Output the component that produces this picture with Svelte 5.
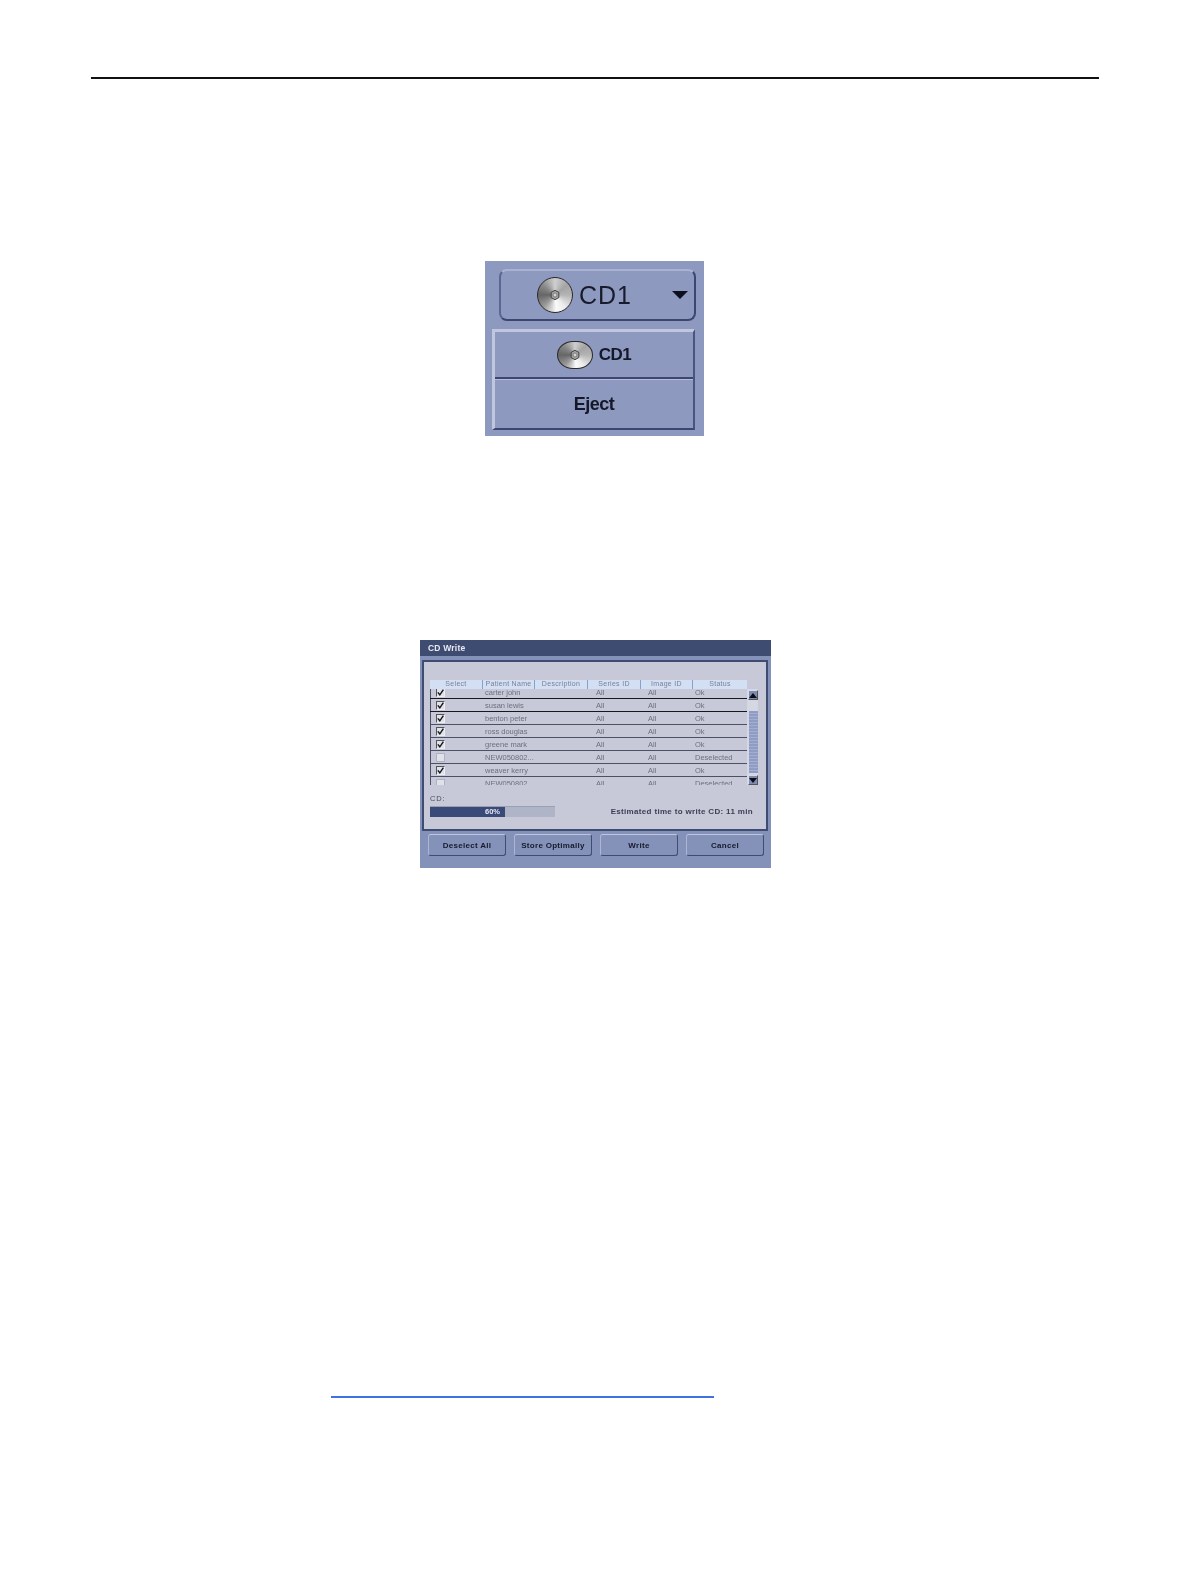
<div class="page">
    <div class="rule"></div>

    <section class="cd-menu">
        <div class="combo">
            {@render disc(false)}
            <span class="combo-label">CD1</span>
            <span class="arrow"></span>
        </div>
        <div class="menu">
            <div class="item first">
                {@render disc(true)}
                <span class="item-label">CD1</span>
            </div>
            <div class="item"><span class="item-label eject">Eject</span></div>
        </div>
    </section>

    <section class="dialog">
        <div class="titlebar">CD Write</div>
        <div class="panel">
            <div class="head">
                {#each columns as col}
                    <span style="width: {col.w}px">{col.label}</span>
                {/each}
            </div>
            <div class="body">
                <div class="rows">
                    {#each rows as row, i}
                        <div class="row" class:dark={i < 2}>
                            <span class="cell-check">
                                <span class="check" class:off={!row.on}>
                                    {#if row.on}
                                        <svg width="7" height="7" viewBox="0 0 7 7" aria-hidden="true">
                                            <path d="M0.8 3.4 L2.8 5.8 L6.4 0.6" fill="none" stroke="#14161e" stroke-width="1.4"/>
                                        </svg>
                                    {/if}
                                </span>
                            </span>
                            <span class="cell-name">{row.name}</span>
                            <span>All</span>
                            <span>All</span>
                            <span>{row.on ? 'Ok' : 'Deselected'}</span>
                        </div>
                    {/each}
                </div>
                <div class="scroll">
                    <span class="sbtn"><i class="up"></i></span>
                    <span class="track"><span class="thumb"></span></span>
                    <span class="sbtn"><i class="down"></i></span>
                </div>
            </div>
            <div class="cd-label">CD:</div>
            <div class="progress-row">
                <div class="progress"><div class="fill" style="width: 60%">60%</div></div>
                <div class="estimate">Estimated time to write CD: 11 min</div>
            </div>
        </div>
        <div class="buttons">
            {#each buttons as b}
                <div class="btn">{b}</div>
            {/each}
        </div>
    </section>

    <div class="link-line"></div>
</div>

{#snippet disc(flat)}
    <span class="disc" class:flat>
        <svg width="12" height="12" viewBox="0 0 14 14" aria-hidden="true">
            <path d="M7 1.5 L11.5 4 L11.5 10 L7 12.5 L2.5 10 L2.5 4 Z" fill="#a2a2a2" stroke="#3c3c3c" stroke-width="1.1" stroke-linejoin="round"/>
            <circle cx="7" cy="7" r="2.3" fill="#d4d4d4" stroke="#666" stroke-width="0.8"/>
        </svg>
    </span>
{/snippet}

<script>
    const columns = [
        { label: 'Select', w: 53 },
        { label: 'Patient Name', w: 52 },
        { label: 'Description', w: 53 },
        { label: 'Series ID', w: 53 },
        { label: 'Image ID', w: 52 },
        { label: 'Status', w: 54 }
    ];

    const rows = [
        { name: 'carter john', on: true },
        { name: 'susan lewis', on: true },
        { name: 'benton peter', on: true },
        { name: 'ross douglas', on: true },
        { name: 'greene mark', on: true },
        { name: 'NEW050802...', on: false },
        { name: 'weaver kerry', on: true },
        { name: 'NEW050802', on: false }
    ];

    const buttons = ['Deselect All', 'Store Optimally', 'Write', 'Cancel'];
</script>

<style>
    :global(body) {
        margin: 0;
        background: #fff;
    }

    .page {
        width: 1190px;
        height: 1584px;
        padding-top: 77px;
        box-sizing: border-box;
        font-family: "Liberation Sans", Arial, sans-serif;
    }

    .rule {
        width: 1008px;
        height: 2px;
        margin-left: 91px;
        background: #111;
    }

    /* device menu */
    .cd-menu {
        margin: 182px 0 0 485px;
        width: 219px;
        height: 175px;
        box-sizing: border-box;
        background: #8e99c0;
        padding: 8px 9px 0 7px;
        filter: blur(0.4px);
    }

    .combo {
        width: 197px;
        height: 52px;
        margin-left: 7px;
        box-sizing: border-box;
        border: 2px solid #3c4670;
        border-top-color: #aab2d2;
        border-left-color: #5c6690;
        border-radius: 8px;
        display: flex;
        align-items: center;
        padding-left: 36px;
        gap: 6px;
        position: relative;
    }

    .combo-label {
        font-size: 25px;
        letter-spacing: 1px;
        color: #171b2b;
    }

    .arrow {
        position: absolute;
        right: 6px;
        top: 20px;
        border-left: 8px solid transparent;
        border-right: 8px solid transparent;
        border-top: 8px solid #0c0f1e;
    }

    .disc {
        width: 36px;
        height: 36px;
        flex: none;
        box-sizing: border-box;
        border: 1px solid #2a2a2a;
        border-radius: 50%;
        display: flex;
        align-items: center;
        justify-content: center;
        background: conic-gradient(#cfcfcf, #a4a4a4 50deg, #b4b4b4 90deg, #ececec 140deg, #fafafa 175deg, #999 225deg, #666 270deg, #8a8a8a 310deg, #cfcfcf);
    }

    .disc.flat {
        height: 28px;
        border-radius: 16px / 14px;
    }

    .menu {
        margin-top: 8px;
        width: 203px;
        height: 101px;
        border: 2px solid #3c4670;
        border-top: 3px solid #c0c6de;
        border-left: 3px solid #c0c6de;
        border-right-color: #4a5480;
        box-sizing: border-box;
    }

    .item {
        height: 50px;
        display: flex;
        align-items: center;
        justify-content: center;
        gap: 6px;
        box-sizing: border-box;
        color: #141828;
    }

    .item.first {
        height: 47px;
        border-bottom: 2px solid #3c4670;
        box-shadow: 0 1px 0 #b4bbd8;
    }

    .item-label {
        font-weight: bold;
        font-size: 17px;
        letter-spacing: -0.5px;
    }

    .eject {
        font-size: 18px;
    }

    /* CD write dialog */
    .dialog {
        margin: 204px 0 0 420px;
        width: 351px;
        height: 228px;
        background: #8492ba;
        filter: blur(0.4px);
    }

    .titlebar {
        height: 16px;
        background: #3e4c72;
        color: #e8ebf4;
        font-size: 8.5px;
        font-weight: bold;
        letter-spacing: 0.2px;
        line-height: 16px;
        padding-left: 8px;
    }

    .panel {
        margin: 4px 3px 0 2px;
        height: 171px;
        box-sizing: border-box;
        background: #c8c9d8;
        border: 2px solid #3e4c72;
        padding: 18px 0 0 6px;
    }

    .head {
        height: 9px;
        width: 317px;
        background: #d3dff2;
        display: flex;
        font-size: 7px;
        letter-spacing: 0.3px;
        line-height: 8px;
        color: #7a8098;
        text-align: center;
    }

    .head span {
        border-right: 1px solid #8aa0c8;
        box-sizing: border-box;
        white-space: nowrap;
    }

    .head span:last-child {
        border-right: 0;
    }

    .body {
        display: flex;
        height: 96px;
        overflow: hidden;
    }

    .rows {
        width: 317px;
        margin-top: -3px;
    }

    .row {
        height: 13px;
        box-sizing: border-box;
        border-bottom: 1px solid #4c5064;
        display: grid;
        grid-template-columns: 53px 113px 52px 47px 1fr;
        align-items: center;
        font-size: 7.5px;
        color: #6c6f7e;
    }

    .row.dark {
        border-bottom-color: #15181f;
    }

    .cell-check {
        height: 100%;
        padding-left: 5px;
        box-sizing: border-box;
        border-left: 1px solid #4c5064;
        display: flex;
        align-items: center;
    }

    .cell-name {
        padding-left: 2px;
    }

    .check {
        width: 9px;
        height: 9px;
        box-sizing: border-box;
        border: 1px solid #555;
        border-right-color: #eee;
        border-bottom-color: #eee;
        background: #e0e2ea;
        display: flex;
        overflow: hidden;
    }

    .check.off {
        border-color: #b0b2c0;
    }

    .scroll {
        width: 11px;
        display: flex;
        flex-direction: column;
        background: #d5d7e2;
        padding-top: 1px;
        box-sizing: border-box;
    }

    .sbtn {
        height: 10px;
        flex: none;
        margin-left: 1px;
        background: #7f8bb2;
        display: flex;
        align-items: center;
        justify-content: center;
        box-sizing: border-box;
        border: 1px solid #d8dbe8;
        border-bottom-color: #555;
        border-right-color: #555;
    }

    .sbtn i {
        border-left: 4px solid transparent;
        border-right: 4px solid transparent;
    }

    .sbtn .up {
        border-bottom: 5px solid #0a0c18;
    }

    .sbtn .down {
        border-top: 5px solid #0a0c18;
    }

    .track {
        flex: 1;
        padding: 11px 0 2px 2px;
        display: flex;
    }

    .thumb {
        flex: 1;
        background: repeating-linear-gradient(#8f9cc4 0 2px, #a3aed0 2px 3px);
    }

    .cd-label {
        margin-top: 9px;
        font-size: 7.5px;
        letter-spacing: 0.8px;
        color: #4a4e60;
        height: 10px;
        line-height: 10px;
    }

    .progress-row {
        margin-top: 2px;
        display: flex;
        align-items: center;
        justify-content: space-between;
        padding-right: 13px;
    }

    .progress {
        width: 125px;
        height: 11px;
        background: #afb4c6;
        border-top: 1px solid #9a9fb2;
        box-sizing: border-box;
    }

    .fill {
        height: 100%;
        background: #3a4a78;
        color: #e4e8f4;
        font-size: 7.5px;
        font-weight: bold;
        line-height: 10px;
        text-align: right;
        padding-right: 5px;
        box-sizing: border-box;
    }

    .estimate {
        font-size: 8px;
        font-weight: bold;
        letter-spacing: 0.33px;
        color: #3c4054;
    }

    .buttons {
        display: flex;
        gap: 8px;
        padding: 3px 0 0 8px;
    }

    .btn {
        width: 78px;
        height: 22px;
        box-sizing: border-box;
        border: 1px solid #3e4c72;
        border-top-color: #c0c6de;
        border-left-color: #aeb6d4;
        border-radius: 3px;
        font-size: 8px;
        font-weight: bold;
        letter-spacing: 0.3px;
        color: #151a2c;
        display: flex;
        align-items: center;
        justify-content: center;
    }

    .link-line {
        margin: 528px 0 0 331px;
        width: 383px;
        height: 2px;
        background: #3f72e0;
    }
</style>
